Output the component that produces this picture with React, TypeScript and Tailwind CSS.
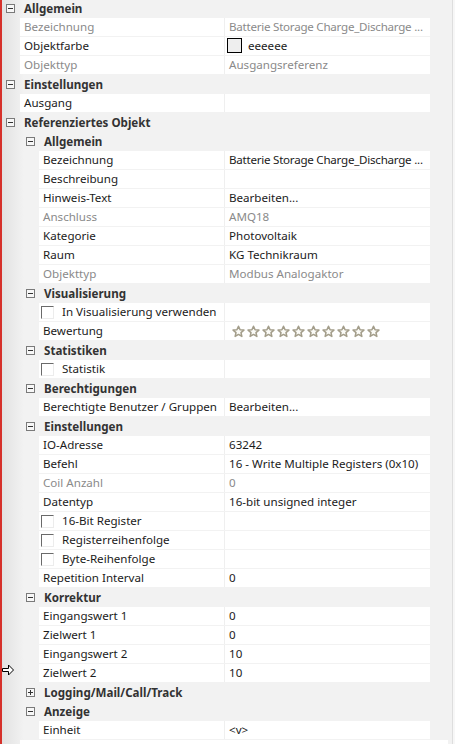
import React from "react";

type Item =
  | { kind: "h"; level: number; label: string; open?: boolean }
  | { kind: "r"; level: number; label: string; value?: React.ReactNode; disabled?: boolean; check?: boolean };

const Star = () => (
  <svg width="13" height="13" viewBox="0 0 24 24" className="shrink-0">
    <path
      d="M12 2.2l2.9 6.6 7.1.6-5.4 4.7 1.6 7-6.2-3.7-6.2 3.7 1.6-7L2 9.4l7.1-.6z"
      fill="#fbfbf7"
      stroke="#a39d8a"
      strokeWidth="2.8"
      strokeLinejoin="round"
    />
  </svg>
);

const Stars = () => (
  <div className="flex items-center gap-[2px] pl-[3px]">
    {Array.from({ length: 10 }).map((_, i) => (
      <Star key={i} />
    ))}
  </div>
);

const ColorVal = () => (
  <div className="flex items-center gap-[6px] -ml-[2px]">
    <div className="w-[15px] h-[15px] border border-black bg-[#eeeeee]" />
    <span>eeeeee</span>
  </div>
);

const LongName = () => <span className="tracking-[-0.25px]">Batterie Storage Charge_Discharge ...</span>;

const items: Item[] = [
  { kind: "h", level: 0, label: "Allgemein" },
  { kind: "r", level: 0, label: "Bezeichnung", value: <LongName />, disabled: true },
  { kind: "r", level: 0, label: "Objektfarbe", value: <ColorVal /> },
  { kind: "r", level: 0, label: "Objekttyp", value: "Ausgangsreferenz", disabled: true },
  { kind: "h", level: 0, label: "Einstellungen" },
  { kind: "r", level: 0, label: "Ausgang", value: "" },
  { kind: "h", level: 0, label: "Referenziertes Objekt" },
  { kind: "h", level: 1, label: "Allgemein" },
  { kind: "r", level: 1, label: "Bezeichnung", value: <LongName /> },
  { kind: "r", level: 1, label: "Beschreibung", value: "" },
  { kind: "r", level: 1, label: "Hinweis-Text", value: "Bearbeiten..." },
  { kind: "r", level: 1, label: "Anschluss", value: "AMQ18", disabled: true },
  { kind: "r", level: 1, label: "Kategorie", value: "Photovoltaik" },
  { kind: "r", level: 1, label: "Raum", value: "KG Technikraum" },
  { kind: "r", level: 1, label: "Objekttyp", value: "Modbus Analogaktor", disabled: true },
  { kind: "h", level: 1, label: "Visualisierung" },
  { kind: "r", level: 1, label: "In Visualisierung verwenden", check: true, value: "" },
  { kind: "r", level: 1, label: "Bewertung", value: <Stars /> },
  { kind: "h", level: 1, label: "Statistiken" },
  { kind: "r", level: 1, label: "Statistik", check: true, value: "" },
  { kind: "h", level: 1, label: "Berechtigungen" },
  { kind: "r", level: 1, label: "Berechtigte Benutzer / Gruppen", value: "Bearbeiten..." },
  { kind: "h", level: 1, label: "Einstellungen" },
  { kind: "r", level: 1, label: "IO-Adresse", value: "63242" },
  { kind: "r", level: 1, label: "Befehl", value: "16 - Write Multiple Registers (0x10)" },
  { kind: "r", level: 1, label: "Coil Anzahl", value: "0", disabled: true },
  { kind: "r", level: 1, label: "Datentyp", value: "16-bit unsigned integer" },
  { kind: "r", level: 1, label: "16-Bit Register", check: true, value: "" },
  { kind: "r", level: 1, label: "Registerreihenfolge", check: true, value: "" },
  { kind: "r", level: 1, label: "Byte-Reihenfolge", check: true, value: "" },
  { kind: "r", level: 1, label: "Repetition Interval", value: "0" },
  { kind: "h", level: 1, label: "Korrektur" },
  { kind: "r", level: 1, label: "Eingangswert 1", value: "0" },
  { kind: "r", level: 1, label: "Zielwert 1", value: "0" },
  { kind: "r", level: 1, label: "Eingangswert 2", value: "10" },
  { kind: "r", level: 1, label: "Zielwert 2", value: "10" },
  { kind: "h", level: 1, label: "Logging/Mail/Call/Track", open: false },
  { kind: "h", level: 1, label: "Anzeige" },
  { kind: "r", level: 1, label: "Einheit", value: "<v>" },
];

const Toggle = ({ open }: { open: boolean }) => (
  <div className="relative w-[9px] h-[9px] border border-[#7a7a7a] bg-[#f7f7f7] shrink-0">
    <div className="absolute left-[1px] right-[1px] top-[3px] h-px bg-[#333]" />
    {!open && <div className="absolute top-[1px] bottom-[1px] left-[3px] w-px bg-[#333]" />}
  </div>
);

const Check = () => (
  <div className="w-[13px] h-[13px] shrink-0 bg-white border-t border-l border-[#6a6a6a] border-r-[#ececec] border-b-[#ececec] border-r border-b" />
);

export default function App() {
  return (
    <div
      className="relative w-[455px] h-[744px] overflow-hidden border-l-2 border-[#d6312b] bg-[linear-gradient(to_right,#e2e2e2,#f2f2f2_22px)] text-[11.6px] text-[#1b1b1b] flex"
      style={{ fontFamily: '"Noto Sans", "Open Sans", sans-serif' }}
    >
      <div className="w-[428px] flex flex-col shrink-0 -mt-px">
        {items.map((it, i) =>
          it.kind === "h" ? (
            <div key={i} className="h-[19px] flex items-center">
              <div className={it.level === 0 ? "w-[4px] shrink-0" : "w-[24px] shrink-0"} />
              <Toggle open={it.open !== false} />
              <span className="font-bold text-[#333333] leading-none ml-[9px]">{it.label}</span>
            </div>
          ) : (
            <div key={i} className="h-[19px] flex pb-px">
              <div className={it.level === 0 ? "w-[18px] shrink-0" : "w-[37px] shrink-0"} />
              <div className={`flex-1 bg-white flex items-center whitespace-nowrap overflow-hidden ${it.check ? "pl-[2px]" : "pl-[4px]"} ${it.disabled ? "text-[#8a8a8a]" : ""}`}>
                {it.check && <Check />}
                <span className={it.check ? "ml-[8px]" : ""}>{it.label}</span>
              </div>
              <div className="w-px bg-[#efefef] shrink-0" />
              <div className={`w-[205px] shrink-0 bg-white flex items-center pl-[4px] whitespace-nowrap overflow-hidden ${it.disabled ? "text-[#8a8a8a]" : ""}`}>
                {it.value}
              </div>
            </div>
          )
        )}
        <div className="h-[4px] bg-white w-[428px] ml-[18px]" />
      </div>
      <div className="flex-1" />
      <div className="w-px bg-[#dedede]" />
      <div className="w-[2px] bg-[#f7f7f7]" />
      <svg className="absolute left-0 top-[664px]" width="13" height="12" viewBox="0 0 13 12">
        <path d="M0.5 4.5H6.5V1L11.5 6L6.5 11V7.5H0.5Z" fill="white" stroke="black" strokeWidth="1" strokeLinejoin="miter" />
      </svg>
    </div>
  );
}
